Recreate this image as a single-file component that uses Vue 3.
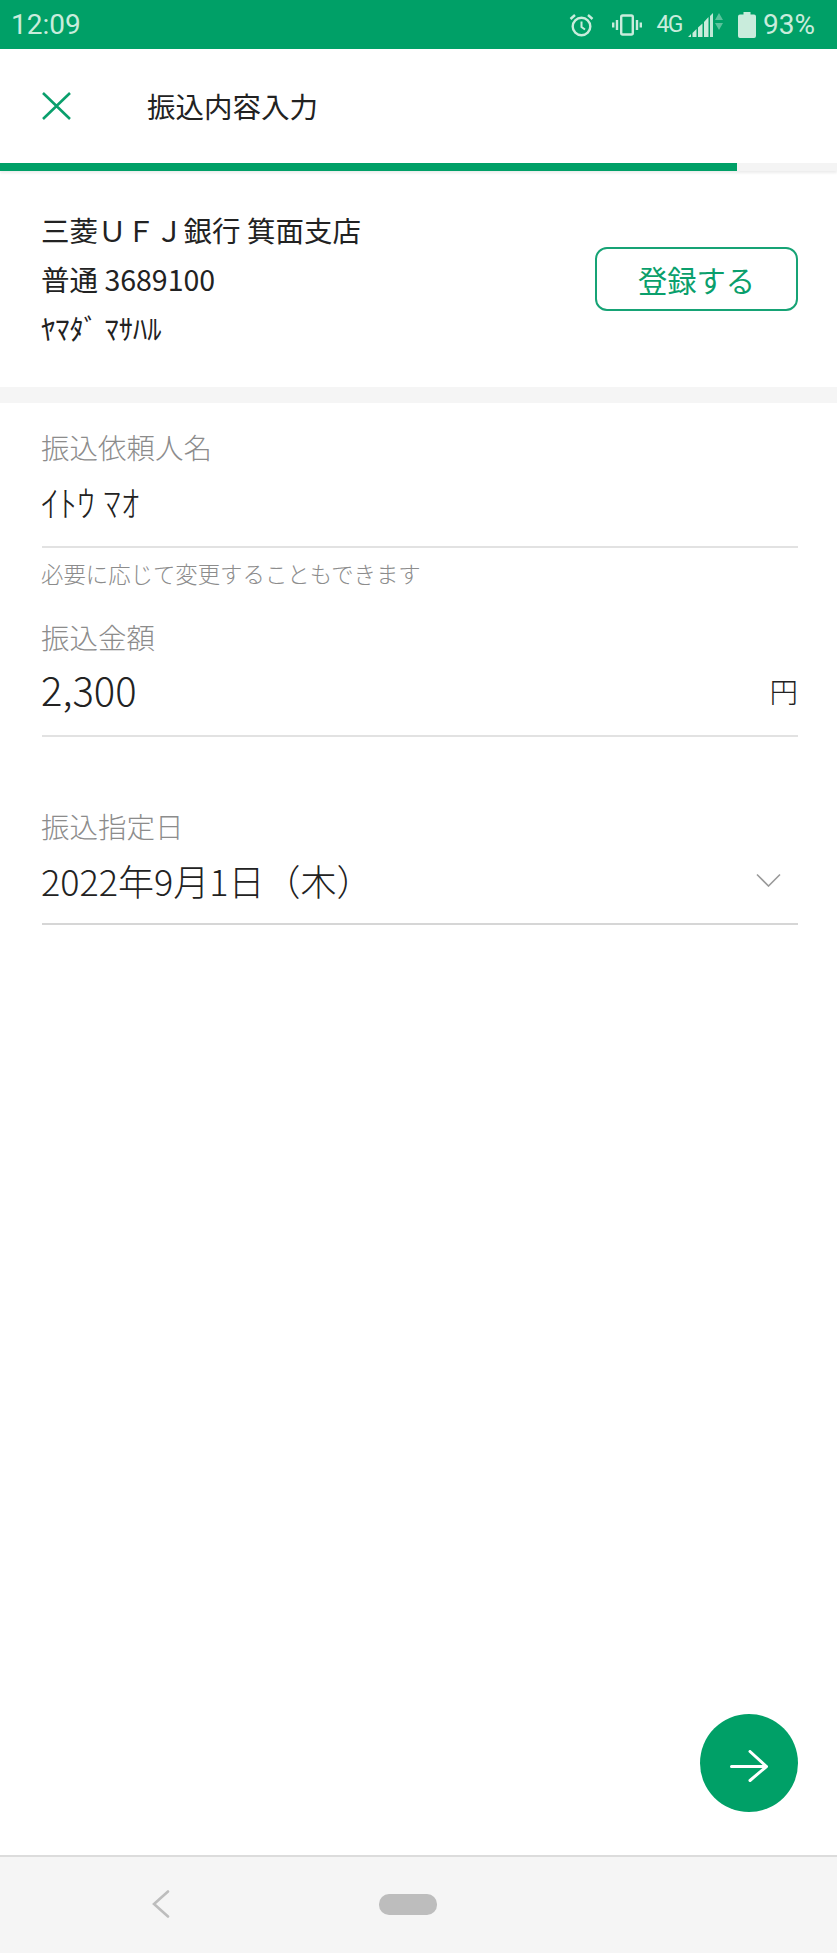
<template>
  <div class="screen">
    <div class="status">
      <span class="time">12:09</span>
      <div class="status-right">
        <svg class="ic-alarm" width="25" height="24" viewBox="0 0 25 24" fill="none" stroke="currentColor" stroke-width="2.400">
          <circle cx="12.500" cy="13.500" r="8.800" />
          <path d="M12.500 8.500v5.500l3.500 2.500" stroke-width="2" />
          <path d="M1.500 6 6 2M23.500 6 19 2" />
        </svg>
        <svg class="ic-vib" width="30" height="22" viewBox="0 0 30 22" fill="none" stroke="currentColor" stroke-width="2.400">
          <rect x="9.200" y="1.500" width="11.600" height="19" rx="1.500" />
          <path d="M5 6v10M1.200 8.500v5M25 6v10M28.800 8.500v5" />
        </svg>
        <span class="net">4G</span>
        <svg class="ic-signal" width="25" height="26" viewBox="0 0 25 26" fill="currentColor">
          <path d="M0 25h3v-3zM4.500 25h4v-8l-4 4zM10 25h4.500V11.500L10 15.500zM16 25h4.500V5L16 10z" />
          <path d="M22 25h3V1l-3 3z" opacity="0.95" />
        </svg>
        <svg class="ic-arrows" width="8" height="17" viewBox="0 0 8 17" fill="currentColor" opacity="0.45">
          <path d="M4 0 8 7H0zM0 10h8l-4 7z" />
        </svg>
        <svg class="ic-batt" width="18" height="26" viewBox="0 0 18 26" fill="currentColor">
          <path d="M5.500 0h7v2.500H16a2 2 0 0 1 2 2V24a2 2 0 0 1-2 2H2a2 2 0 0 1-2-2V4.500a2 2 0 0 1 2-2h3.500z" />
        </svg>
        <span class="pct">93%</span>
      </div>
    </div>

    <header class="head">
      <svg class="close" width="29" height="28" viewBox="0 0 29 28" fill="none" stroke="#0a9f6c" stroke-width="2.600">
        <path d="M1 1l27 26M28 1 1 27" />
      </svg>
      <h1 class="title">振込内容入力</h1>
    </header>

    <div class="progress">
      <div class="progress-fill" :style="{ width: progress + 'px' }"></div>
    </div>

    <section class="payee">
      <div class="payee-text">
        <p>{{ payee.bank }}</p>
        <p>{{ payee.account }}</p>
        <p>{{ payee.kana }}</p>
      </div>
      <button class="register">登録する</button>
    </section>

    <div class="band"></div>

    <main class="form">
      <label class="lbl first">振込依頼人名</label>
      <div class="row">
        <span class="val name">ｲﾄｳ ﾏｵ</span>
      </div>
      <p class="hint">必要に応じて変更することもできます</p>

      <label class="lbl">振込金額</label>
      <div class="row second">
        <span class="val amount">2,300</span>
        <span class="yen">円</span>
      </div>

      <label class="lbl third">振込指定日</label>
      <div class="row last">
        <span class="val date">2022年9月1日（木）</span>
        <svg class="chev" width="25" height="14" viewBox="0 0 25 14" fill="none" stroke="#9a9a9a" stroke-width="1.600">
          <path d="M1 1.500 12.500 13 24 1.500" />
        </svg>
      </div>

      <div class="fab-wrap">
        <button class="fab" aria-label="次へ">
          <svg width="38" height="32" viewBox="0 0 38 32" fill="none" stroke="#fff" stroke-width="3" stroke-linecap="round" stroke-linejoin="round">
            <path d="M1.500 16.500h35M20 1.500l16.500 15-16.500 14" />
          </svg>
        </button>
      </div>
    </main>

    <nav class="navbar">
      <svg class="back" width="18" height="28" viewBox="0 0 18 28" fill="none" stroke="#bdbdbd" stroke-width="2.600" stroke-linecap="round">
        <path d="M16 1.500 2 14l14 12.500" />
      </svg>
      <span class="pill"></span>
    </nav>
  </div>
</template>

<script setup>
const progress = 737

const payee = {
  bank: '三菱ＵＦＪ銀行 箕面支店',
  account: '普通 3689100',
  kana: 'ﾔﾏﾀﾞ ﾏｻﾊﾙ',
}
</script>

<style>
html,
body {
  margin: 0;
  background: #fff;
}
</style>

<style scoped>
.screen {
  width: 837px;
  height: 1953px;
  display: flex;
  flex-direction: column;
  background: #fff;
  color: #222;
  font-family: "Noto Sans CJK JP", "Noto Sans", sans-serif;
  font-weight: 300;
  overflow: hidden;
}
.status {
  height: 49px;
  flex: none;
  background: #00a067;
  color: #c9ecdc;
  display: flex;
  align-items: center;
  justify-content: space-between;
  padding: 0 22px 0 11px;
  font-family: Roboto, sans-serif;
  font-size: 28px;
  font-weight: 400;
}
.time {
  line-height: 49px;
}
.status-right {
  display: flex;
  align-items: center;
}
.status-right svg {
  display: block;
}
.ic-alarm {
  margin-right: 18px;
}
.net {
  font-size: 23px;
  letter-spacing: -1.500px;
  margin: 0 6px 0 14px;
}
.ic-arrows {
  margin: -6px 15px 0 2px;
}
.pct {
  margin-left: 7px;
}
.head {
  height: 114px;
  flex: none;
  display: flex;
  align-items: center;
  padding-left: 42px;
}
.close {
  display: block;
}
.title {
  margin: 0 0 0 76px;
  font-size: 28.500px;
  font-weight: 400;
  line-height: 40px;
}
.progress {
  height: 8px;
  flex: none;
  background: #f4f4f4;
  box-shadow: 0 2px 3px rgba(0, 0, 0, 0.08);
}
.progress-fill {
  height: 100%;
  background: #00a067;
}
.payee {
  height: 216px;
  flex: none;
  box-sizing: border-box;
  padding: 34px 39px 0 41px;
  display: flex;
  justify-content: space-between;
  align-items: flex-start;
}
.payee-text p {
  margin: 0;
  font-size: 28.500px;
  font-weight: 400;
  line-height: 49px;
}
.register {
  margin-top: 42px;
  width: 203px;
  height: 64px;
  box-sizing: border-box;
  background: #fff;
  border: 2px solid #16a375;
  border-radius: 12px;
  color: #0a9f6c;
  font-family: inherit;
  font-weight: 400;
  font-size: 29.300px;
  padding: 0;
}
.band {
  height: 16px;
  flex: none;
  background: #f5f5f5;
}
.form {
  flex: 1;
  display: flex;
  flex-direction: column;
  padding: 24px 39px 0 41px;
}
.lbl {
  display: block;
  font-size: 28.500px;
  line-height: 40px;
  color: #8c8c8c;
}
.third {
  margin-top: 69px;
}
.row {
  height: 79px;
  margin-left: 1px;
  border-bottom: 2px solid #e2e2e2;
  display: flex;
  justify-content: space-between;
  align-items: flex-start;
}
.row.second {
  height: 78px;
}
.row.last {
  height: 77px;
  border-bottom-color: #d6d6d6;
}
.val {
  line-height: 68px;
  margin-left: -1px;
}
.name {
  font-size: 36px;
}
.amount {
  font-size: 40px;
  line-height: 64px;
}
.date {
  font-size: 36px;
}
.yen {
  font-size: 28.500px;
  line-height: 68px;
}
.chev {
  margin: 27px 17px 0 0;
}
.hint {
  margin: 0 0 19px;
  font-size: 22.400px;
  line-height: 50px;
  color: #8c8c8c;
}
.fab-wrap {
  margin-top: auto;
  display: flex;
  justify-content: flex-end;
  padding-bottom: 43px;
}
.fab {
  width: 98px;
  height: 98px;
  border: 0;
  border-radius: 50%;
  background: #00a067;
  padding: 6px 0 0;
  display: flex;
  align-items: center;
  justify-content: center;
}
.navbar {
  height: 98px;
  flex: none;
  box-sizing: border-box;
  background: #f5f5f5;
  border-top: 2px solid #dcdcdc;
  display: flex;
  align-items: center;
  padding: 0 0 2px 152px;
}
.back {
  display: block;
}
.pill {
  width: 58px;
  height: 21px;
  border-radius: 10px;
  background: #bdbdbd;
  margin-left: 209px;
}
</style>
